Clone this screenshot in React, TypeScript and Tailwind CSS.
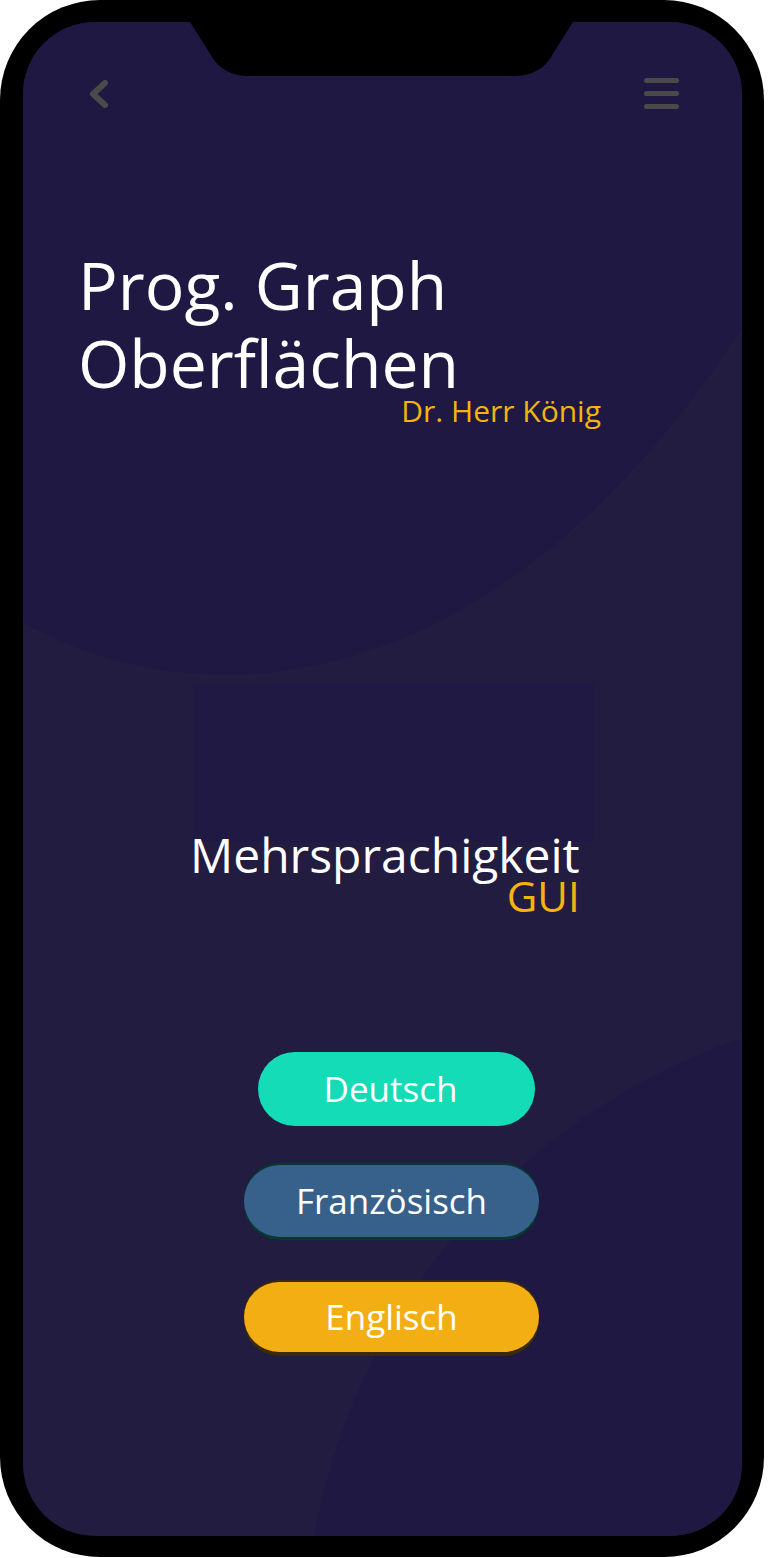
const languages = [
  { label: "Deutsch", cls: "ml-[235px] w-[277px] h-[74px] pr-[12px] bg-[#13dcb6]" },
  { label: "Französisch", cls: "mt-[39px] ml-[221px] w-[295px] h-[72px] bg-[#37618a] shadow-[0_-2px_0_#06392f,0_3px_0_#06392f]" },
  { label: "Englisch", cls: "mt-[45px] ml-[221px] w-[295px] h-[70px] bg-[#f3ae14] shadow-[0_-2px_0_#3b2a0a,0_4px_0_#3b2a0a]" },
];

export default function App() {
  return (
    <div className="min-h-screen bg-white" style={{ fontFamily: '"Open Sans", "Noto Sans", sans-serif' }}>
      {/* Phone frame */}
      <div className="w-[764px] h-[1557px] bg-black rounded-[100px] pl-[23px] pr-[22px] pt-[22px] pb-[21px]">
        <div className="relative h-full rounded-[72px] overflow-hidden bg-[#221c41]">
          {/* Background shapes */}
          <svg className="absolute inset-0" width="718" height="1514" viewBox="0 0 718 1514">
            <path d="M0 0 H718 V308 C457 705 157 690 0 600 Z" fill="#1f1843" />
            <circle cx="927" cy="1628" r="646" fill="#1f1843" />
          </svg>

          {/* Notch */}
          <svg className="absolute left-0 top-0" width="718" height="60" viewBox="0 0 718 60">
            <path d="M167 0 L186 30 Q198 54 226 54 L491 54 Q519 54 531 30 L550 0 Z" fill="#000" />
          </svg>

          <div className="relative flex flex-col">
            {/* Top bar */}
            <div className="flex items-start justify-between pt-[56px] pl-[65px] pr-[63px]">
              <svg width="26" height="32" viewBox="0 0 26 32" fill="none" stroke="#4a4a4a" strokeWidth="6" strokeLinecap="round" strokeLinejoin="round">
                <polyline points="17,5 5,16 17,27" />
              </svg>
              <div className="flex flex-col gap-[8px] w-[35px]">
                <span className="h-[5px] rounded-full bg-[#4b4a49]" />
                <span className="h-[5px] rounded-full bg-[#4b4a49]" />
                <span className="h-[5px] rounded-full bg-[#4b4a49]" />
              </div>
            </div>

            {/* Course title */}
            <div className="mt-[135px] ml-[55px] w-[523px] flex flex-col">
              <h1 className="text-[66px] leading-[78px] text-white font-normal">
                Prog. Graph
                <br />
                Oberflächen
              </h1>
              <span className="-mt-[6px] self-end text-[30px] leading-[32px] text-[#f5b30d]">Dr. Herr König</span>
            </div>

            {/* Image placeholder */}
            <div className="mt-[257px] ml-[170px] w-[401px] h-[158px] bg-[#201943]" />

            {/* Topic */}
            <div className="-mt-[12px] ml-[167px] w-fit flex flex-col items-end">
              <span className="text-[48px] leading-[50px] text-white">Mehrsprachigkeit</span>
              <span className="-mt-[6px] text-[42px] leading-[44px] text-[#f5b30d]">GUI</span>
            </div>

            {/* Language buttons */}
            <div className="mt-[134px] flex flex-col">
              {languages.map((l) => (
                <button key={l.label} className={`${l.cls} rounded-full flex items-center justify-center text-white text-[35px]`}>
                  {l.label}
                </button>
              ))}
            </div>
          </div>
        </div>
      </div>
    </div>
  );
}
